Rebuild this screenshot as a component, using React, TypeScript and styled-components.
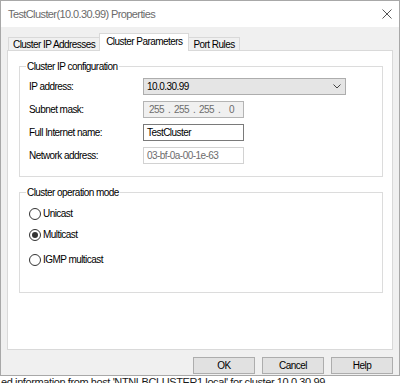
import styled, { createGlobalStyle } from "styled-components"

const UI_FONT = `"Liberation Sans", Arial, sans-serif`

const Global = createGlobalStyle`
    html, body {
        margin: 0;
        padding: 0;
        background: #ffffff;
    }
    body {
        font-family: ${UI_FONT};
        font-size: 10px;
        letter-spacing: -0.55px;
        color: #000;
    }
`

const Page = styled.div`
    width: 400px;
    height: 383px;
    display: flex;
    flex-direction: column;
    overflow: hidden;
`

const Window = styled.div`
    width: 400px;
    height: 376px;
    box-sizing: border-box;
    border: 1px solid #a8a8a8;
    display: flex;
    flex-direction: column;
    background: #f0f0f0;
`

const TitleBar = styled.div`
    height: 26px;
    flex-shrink: 0;
    background: #fff;
    display: flex;
    align-items: center;
    justify-content: space-between;
    padding: 0 7px 0 7px;
    font-size: 11px;
    letter-spacing: -0.6px;
    color: #6b6b6b;
`

const Body = styled.div`
    flex: 1;
    display: flex;
    flex-direction: column;
    padding: 6px 6px 0 6px;
`

const TabStrip = styled.div`
    display: flex;
    align-items: flex-end;
    height: 18px;
    margin-bottom: -1px;
    padding-left: 1px;
`

const Tab = styled.div<{ $active?: boolean }>`
    box-sizing: border-box;
    display: flex;
    align-items: center;
    border: 1px solid #d9d9d9;
    border-bottom: none;
    white-space: nowrap;
    position: relative;
    ${p => p.$active ? `
        height: 18px;
        padding: 0 6px 2px 6px;
        background: #fff;
        z-index: 2;
        margin: 0 -1px;
    ` : `
        height: 13px;
        margin-bottom: 1px;
        padding: 0 4px;
        background: #f0f0f0;
    `}
`

const TabPanel = styled.div`
    box-sizing: border-box;
    height: 300px;
    background: #fff;
    border: 1px solid #d9d9d9;
    padding: 9px 9px 0 11px;
    display: flex;
    flex-direction: column;
    gap: 9px;
`

const Group = styled.fieldset<{ $height: number }>`
    margin: 0;
    box-sizing: border-box;
    height: ${p => p.$height}px;
    border: 1px solid #dcdcdc;
    padding: 5px 9px 0 9px;
`

const Legend = styled.legend`
    padding: 0 1px;
    margin-left: -3px;
    line-height: 13px;
`

const FieldGrid = styled.div`
    display: grid;
    grid-template-columns: 114px auto;
    row-gap: 6px;
    align-items: center;
`

const FieldLabel = styled.span`
    line-height: 17px;
`

const Combo = styled.div`
    box-sizing: border-box;
    width: 203px;
    height: 17px;
    background: #e5e5e5;
    border: 1px solid #adadad;
    display: flex;
    align-items: center;
    justify-content: space-between;
    padding: 0 4px 0 3px;
`

const Edit = styled.div<{ $variant: "normal" | "disabled" | "readonly" }>`
    box-sizing: border-box;
    width: 101px;
    height: 17px;
    display: flex;
    align-items: center;
    padding: 0 3px;
    border: 1px solid ${p => p.$variant === "normal" ? "#7a7a7a" : p.$variant === "disabled" ? "#b4b4b4" : "#d2d2d2"};
    background: ${p => p.$variant === "disabled" ? "#f0f0f0" : "#fff"};
    color: ${p => p.$variant === "normal" ? "#000" : "#6d6d6d"};
`

const IpEdit = styled(Edit)`
    padding: 0 0 0 2px;
`

const Octet = styled.span`
    width: 21px;
    text-align: center;
`

const Dot = styled.span`
    width: 4px;
    text-align: center;
`

const RadioList = styled.div`
    display: flex;
    flex-direction: column;
    padding-top: 3px;
`

const RadioRow = styled.div<{ $gap: number }>`
    display: flex;
    align-items: center;
    gap: 2px;
    height: 13px;
    margin-bottom: ${p => p.$gap}px;
`

const RadioCircle = styled.span<{ $checked?: boolean }>`
    box-sizing: border-box;
    width: 12px;
    height: 12px;
    border-radius: 50%;
    border: 1px solid #333;
    background: #fff;
    display: flex;
    align-items: center;
    justify-content: center;
    &::after {
        content: "";
        width: 6px;
        height: 6px;
        border-radius: 50%;
        background: ${p => p.$checked ? "#333" : "transparent"};
    }
`

const ButtonRow = styled.div`
    display: flex;
    justify-content: flex-end;
    gap: 7px;
    margin-top: 7px;
`

const Button = styled.div`
    box-sizing: border-box;
    width: 62px;
    height: 17px;
    background: #e1e1e1;
    border: 1px solid #adadad;
    display: flex;
    align-items: center;
    justify-content: center;
`

const BehindStrip = styled.div`
    height: 7px;
    overflow: hidden;
    background: #fff;
    padding-left: 1px;
    font-size: 11px;
    letter-spacing: -0.4px;
    line-height: 12px;
    color: #1a1a1a;
    white-space: nowrap;
`

function CloseIcon() {
    return (
        <svg width="10" height="10" viewBox="0 0 10 10">
            <path d="M0.5 0.5 L9.5 9.5 M9.5 0.5 L0.5 9.5" stroke="#555" strokeWidth="1" fill="none" />
        </svg>
    )
}

function Chevron() {
    return (
        <svg width="8" height="5" viewBox="0 0 8 5">
            <path d="M0.5 0.5 L4 4 L7.5 0.5" stroke="#444" strokeWidth="1" fill="none" />
        </svg>
    )
}

function Radio(props: { label: string; checked?: boolean; gap: number }) {
    return (
        <RadioRow $gap={props.gap}>
            <RadioCircle $checked={props.checked} />
            <span>{props.label}</span>
        </RadioRow>
    )
}

export default function App() {
    const octets = ["255", "255", "255", "0"]
    return (
        <Page>
            <Global />
            <Window>
                <TitleBar>
                    <span>TestCluster(10.0.30.99) Properties</span>
                    <CloseIcon />
                </TitleBar>
                <Body>
                    <TabStrip>
                        <Tab>Cluster IP Addresses</Tab>
                        <Tab $active>Cluster Parameters</Tab>
                        <Tab>Port Rules</Tab>
                    </TabStrip>
                    <TabPanel>
                        <Group $height={117}>
                            <Legend>Cluster IP configuration</Legend>
                            <FieldGrid>
                                <FieldLabel>IP address:</FieldLabel>
                                <Combo>
                                    <span>10.0.30.99</span>
                                    <Chevron />
                                </Combo>
                                <FieldLabel>Subnet mask:</FieldLabel>
                                <IpEdit $variant="disabled">
                                    {octets.map((o, i) => (
                                        <>
                                            <Octet key={"o" + i}>{o}</Octet>
                                            {i < 3 ? <Dot key={"d" + i}>.</Dot> : ""}
                                        </>
                                    ))}
                                </IpEdit>
                                <FieldLabel>Full Internet name:</FieldLabel>
                                <Edit $variant="normal">TestCluster</Edit>
                                <FieldLabel>Network address:</FieldLabel>
                                <Edit $variant="readonly">03-bf-0a-00-1e-63</Edit>
                            </FieldGrid>
                        </Group>
                        <Group $height={107}>
                            <Legend>Cluster operation mode</Legend>
                            <RadioList>
                                <Radio label="Unicast" gap={8} />
                                <Radio label="Multicast" checked gap={12} />
                                <Radio label="IGMP multicast" gap={0} />
                            </RadioList>
                        </Group>
                    </TabPanel>
                    <ButtonRow>
                        <Button>OK</Button>
                        <Button>Cancel</Button>
                        <Button>Help</Button>
                    </ButtonRow>
                </Body>
            </Window>
            <BehindStrip>ed information from host 'NTNLBCLUSTER1.local' for cluster 10.0.30.99</BehindStrip>
        </Page>
    )
}
